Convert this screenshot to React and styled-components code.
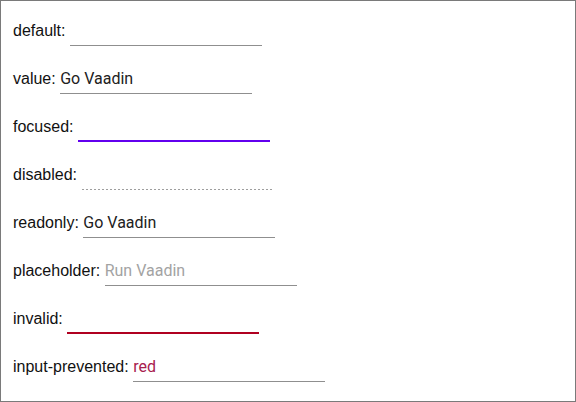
import React from 'react'
import styled, { createGlobalStyle, css } from 'styled-components'

const GlobalStyle = createGlobalStyle`
  html, body {
    margin: 0;
    padding: 0;
    background: #fff;
  }
`

const rows = [
  { label: 'default', value: '' },
  { label: 'value', value: 'Go Vaadin' },
  { label: 'focused', value: '', state: 'focused' },
  { label: 'disabled', value: '', state: 'disabled' },
  { label: 'readonly', value: 'Go Vaadin', state: 'readonly' },
  { label: 'placeholder', value: '', placeholder: 'Run Vaadin' },
  { label: 'invalid', value: '', state: 'invalid' },
  { label: 'input-prevented', value: 'red', state: 'prevented' },
]

const App = () => {
  return (
    <>
      <GlobalStyle />
      <Page>
        {rows.map((r) => (
          <Row key={r.label}>
            <Label>{r.label}:</Label>
            <Field $state={r.state}>
              <Input
                value={r.value}
                placeholder={r.placeholder}
                readOnly
                disabled={r.state === 'disabled'}
                $state={r.state}
              />
            </Field>
          </Row>
        ))}
      </Page>
    </>
  )
}

export default App

const Page = styled.div`
  box-sizing: border-box;
  width: 576px;
  height: 402px;
  border: 1px solid #7a7a7a;
  padding: 20px 12px 0;
  display: flex;
  flex-direction: column;
`

const Row = styled.div`
  display: flex;
  align-items: baseline;
  height: 48px;
  flex-shrink: 0;
`

const Label = styled.span`
  font-family: "Liberation Sans", Arial, sans-serif;
  font-size: 16px;
  color: #111;
`

const Field = styled.div`
  margin-left: 4.5px;
  width: 192px;
  padding-bottom: 4px;
  border-bottom: 1px solid #8f8f8f;
  display: flex;
  ${(p) =>
    p.$state === 'focused' &&
    css`
      padding-bottom: 3px;
      border-bottom: 2px solid #6200ee;
    `}
  ${(p) =>
    p.$state === 'invalid' &&
    css`
      padding-bottom: 3px;
      border-bottom: 2px solid #b00020;
    `}
  ${(p) =>
    p.$state === 'disabled' &&
    css`
      border-bottom: none;
      padding-bottom: 5px;
      background-image: linear-gradient(90deg, #9e9e9e 0, #9e9e9e 2px, transparent 2px);
      background-size: 4px 1px;
      background-repeat: repeat-x;
      background-position: left bottom;
    `}
`

const Input = styled.input`
  width: 100%;
  height: 20px;
  line-height: 20px;
  padding: 0;
  margin: 0;
  border: none;
  outline: none;
  background: transparent;
  font-family: Roboto, "Noto Sans", sans-serif;
  font-size: 16px;
  color: #212121;
  ::placeholder {
    color: #a3a3a3;
  }
  &::placeholder {
    color: #a3a3a3;
  }
  ${(p) =>
    p.$state === 'prevented' &&
    css`
      color: #a8204e;
    `}
`
